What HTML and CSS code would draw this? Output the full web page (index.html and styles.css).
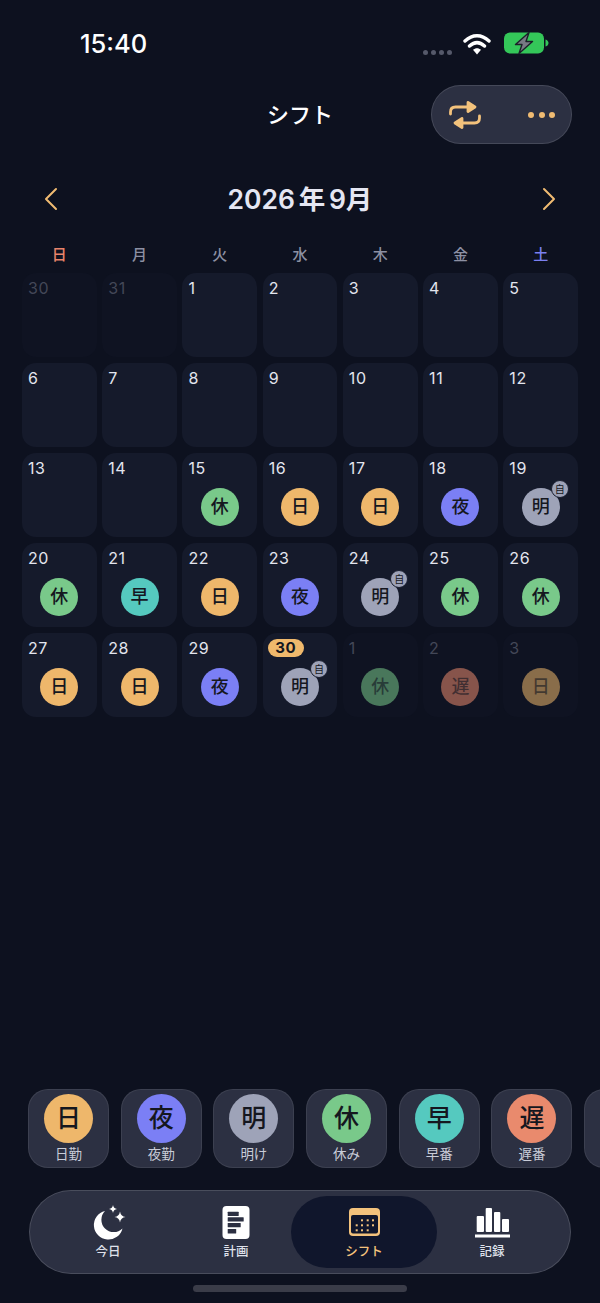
FILE: index.html
```html
<!DOCTYPE html>
<html lang="ja">
<head>
  <title>シフト</title>
  <link rel="stylesheet" href="styles.css">
</head>
<body>
  <div class="status-bar">
    <span class="time">15:40</span>
    <div class="status-icons">
      <div class="signal"><i></i><i></i><i></i><i></i></div>
      <svg class="wifi" width="28" height="22" viewBox="0 0 28 22">
        <path d="M2 8C9.5 1 18.5 1 26 8M6.5 13C11.5 8.5 16.5 8.5 21.5 13" fill="none" stroke="#fff" stroke-width="3.4" stroke-linecap="round"/>
        <path d="M10 16.8C12.5 14.6 15.5 14.6 18 16.8L14 21.5Z" fill="#fff"/>
      </svg>
      <svg class="battery" width="45" height="22" viewBox="0 0 45 22">
        <rect x="0" y="0.5" width="40" height="21" rx="6" fill="#34c759"/>
        <path d="M41.5 7.5C43.5 8 44.5 9.5 44.5 11C44.5 12.5 43.5 14 41.5 14.5Z" fill="#34c759"/>
        <path d="M25 0.5L11.5 12.5H18L15 21.5L28.5 9.5H22Z" fill="#777a84" stroke="#1b2028" stroke-width="1.4" stroke-linejoin="round"/>
      </svg>
    </div>
  </div>

  <header class="top-bar">
    <span></span>
    <h1 class="title">シフト</h1>
    <div class="actions">
      <svg width="34" height="30" viewBox="0 0 34 30" fill="none" stroke="#f3c27c" stroke-width="2.8" stroke-linecap="round" stroke-linejoin="round">
        <path d="M2.5 14V12C2.5 8.5 4.5 7 7.5 7H21"/>
        <path d="M20 2.5L27 7L20 11.5Z" fill="#f3c27c"/>
        <path d="M31.5 16V18C31.5 21.5 29.5 23 26.5 23H13"/>
        <path d="M14 18.5L7 23L14 27.5Z" fill="#f3c27c"/>
      </svg>
      <div class="more"><i></i><i></i><i></i></div>
    </div>
  </header>

  <div class="month-row">
    <svg width="14" height="24" viewBox="0 0 14 24" fill="none" stroke="#f0bb72" stroke-width="2" stroke-linecap="round" stroke-linejoin="round"><path d="M12 2L2 12L12 22"/></svg>
    <h2 class="month">2026 年 9月</h2>
    <svg width="14" height="24" viewBox="0 0 14 24" fill="none" stroke="#f0bb72" stroke-width="2" stroke-linecap="round" stroke-linejoin="round"><path d="M2 2L12 12L2 22"/></svg>
  </div>

  <div class="weekdays">
    <span class="sun">日</span><span>月</span><span>火</span><span>水</span><span>木</span><span>金</span><span class="sat">土</span>
  </div>

  <div class="calendar">
    <div class="day other"><span class="num">30</span></div>
    <div class="day other"><span class="num">31</span></div>
    <div class="day"><span class="num">1</span></div>
    <div class="day"><span class="num">2</span></div>
    <div class="day"><span class="num">3</span></div>
    <div class="day"><span class="num">4</span></div>
    <div class="day"><span class="num">5</span></div>

    <div class="day"><span class="num">6</span></div>
    <div class="day"><span class="num">7</span></div>
    <div class="day"><span class="num">8</span></div>
    <div class="day"><span class="num">9</span></div>
    <div class="day"><span class="num">10</span></div>
    <div class="day"><span class="num">11</span></div>
    <div class="day"><span class="num">12</span></div>

    <div class="day"><span class="num">13</span></div>
    <div class="day"><span class="num">14</span></div>
    <div class="day"><span class="num">15</span><div class="shift rest">休</div></div>
    <div class="day"><span class="num">16</span><div class="shift dayshift">日</div></div>
    <div class="day"><span class="num">17</span><div class="shift dayshift">日</div></div>
    <div class="day"><span class="num">18</span><div class="shift night">夜</div></div>
    <div class="day"><span class="num">19</span><div class="shift after">明<span class="auto">自</span></div></div>

    <div class="day"><span class="num">20</span><div class="shift rest">休</div></div>
    <div class="day"><span class="num">21</span><div class="shift early">早</div></div>
    <div class="day"><span class="num">22</span><div class="shift dayshift">日</div></div>
    <div class="day"><span class="num">23</span><div class="shift night">夜</div></div>
    <div class="day"><span class="num">24</span><div class="shift after">明<span class="auto">自</span></div></div>
    <div class="day"><span class="num">25</span><div class="shift rest">休</div></div>
    <div class="day"><span class="num">26</span><div class="shift rest">休</div></div>

    <div class="day"><span class="num">27</span><div class="shift dayshift">日</div></div>
    <div class="day"><span class="num">28</span><div class="shift dayshift">日</div></div>
    <div class="day"><span class="num">29</span><div class="shift night">夜</div></div>
    <div class="day"><span class="num today">30</span><div class="shift after">明<span class="auto">自</span></div></div>
    <div class="day other"><span class="num">1</span><div class="shift rest">休</div></div>
    <div class="day other"><span class="num">2</span><div class="shift late">遅</div></div>
    <div class="day other"><span class="num">3</span><div class="shift dayshift">日</div></div>
  </div>

  <div class="palette">
    <div class="chip"><div class="chip-circle dayshift">日</div><span>日勤</span></div>
    <div class="chip"><div class="chip-circle night">夜</div><span>夜勤</span></div>
    <div class="chip"><div class="chip-circle after">明</div><span>明け</span></div>
    <div class="chip"><div class="chip-circle rest">休</div><span>休み</span></div>
    <div class="chip"><div class="chip-circle early">早</div><span>早番</span></div>
    <div class="chip"><div class="chip-circle late">遅</div><span>遅番</span></div>
    <div class="chip"></div>
  </div>

  <nav class="tabbar">
    <div class="tab">
      <svg class="tab-icon" viewBox="0 0 34 34">
        <path d="M14 6A14.5 14.5 0 1 0 31.5 23.5A11.5 11.5 0 0 1 14 6Z" fill="#fff"/>
        <path d="M29 6.5Q29.7 11.3 34.5 12Q29.7 12.7 29 17.5Q28.3 12.7 23.5 12Q28.3 11.3 29 6.5Z" fill="#fff"/>
        <path d="M22 0Q22.5 3.5 26 4Q22.5 4.5 22 8Q21.5 4.5 18 4Q21.5 3.5 22 0Z" fill="#fff"/>
      </svg>
      <span>今日</span>
    </div>
    <div class="tab">
      <svg class="tab-icon" viewBox="0 0 34 34">
        <rect x="3.5" y="1" width="27" height="33" rx="4" fill="#fff"/>
        <g fill="#2c3042">
          <rect x="8.7" y="6.7" width="11" height="4.3" rx="0.5"/>
          <rect x="8.7" y="12.3" width="16" height="4.3" rx="0.5"/>
          <rect x="8.7" y="18" width="13" height="4.3" rx="0.5"/>
          <rect x="8.7" y="24" width="8.5" height="4.5" rx="0.5"/>
        </g>
      </svg>
      <span>計画</span>
    </div>
    <div class="tab active">
      <svg class="tab-icon" viewBox="0 0 34 34">
        <rect x="2" y="3" width="31" height="28" rx="4" fill="#f3c27c"/>
        <rect x="4" y="10" width="27" height="18.5" rx="2" fill="#10162c"/>
        <g fill="#f3c27c">
          <rect x="14" y="14.3" width="2" height="2"/><rect x="19.7" y="14.3" width="2" height="2"/><rect x="25" y="14.3" width="2" height="2"/>
          <rect x="8.7" y="19.3" width="2" height="2"/><rect x="14" y="19.3" width="2" height="2"/><rect x="19.7" y="19.3" width="2" height="2"/><rect x="25" y="19.3" width="2" height="2"/>
          <rect x="8.7" y="24.3" width="2" height="2"/><rect x="14" y="24.3" width="2" height="2"/><rect x="19.7" y="24.3" width="2" height="2"/>
        </g>
      </svg>
      <span>シフト</span>
    </div>
    <div class="tab">
      <svg class="tab-icon" viewBox="0 0 34 34">
        <g fill="#fff">
          <rect x="1.7" y="11" width="7.3" height="16" rx="1"/>
          <rect x="10.7" y="3" width="6.3" height="24" rx="1"/>
          <rect x="19" y="7" width="6.3" height="20" rx="1"/>
          <rect x="27" y="14" width="7" height="13" rx="1"/>
          <rect x="0" y="29.5" width="35" height="3"/>
        </g>
      </svg>
      <span>記録</span>
    </div>
  </nav>

  <div class="home-indicator"></div>
</body>
</html>
```

FILE: styles.css
```css
* {
  box-sizing: border-box;
}

body {
  margin: 0;
  width: 600px;
  height: 1303px;
  overflow: hidden;
  display: flex;
  flex-direction: column;
  background-color: #0d111f;
  color: #e8eaf2;
  font-family: Inter, "Noto Sans CJK JP", sans-serif;
}

/* status bar */
.status-bar {
  height: 85px;
  flex-shrink: 0;
  display: flex;
  justify-content: space-between;
  align-items: flex-start;
  padding: 28px 51px 0 80px;
}

.time {
  font-size: 25.5px;
  line-height: 32px;
  font-weight: 500;
  color: #fff;
}

.status-icons {
  display: flex;
  align-items: flex-start;
  padding-top: 4px;
}

.signal {
  display: flex;
  gap: 3px;
  margin: 18px 11px 0 0;
}

.signal i {
  width: 5px;
  height: 5px;
  border-radius: 50%;
  background-color: #55596a;
}

.wifi {
  margin: 1px 13px 0 0;
}

/* header */
.top-bar {
  height: 59px;
  flex-shrink: 0;
  display: grid;
  grid-template-columns: 1fr auto 1fr;
  align-items: center;
}

.title {
  margin: 0;
  padding-bottom: 4px;
  font-size: 22px;
  font-weight: 500;
  color: #fff;
}

.actions {
  justify-self: end;
  width: 141px;
  height: 59px;
  margin-right: 28px;
  display: flex;
  align-items: center;
  justify-content: space-between;
  padding: 0 16px;
  background-color: #2c3042;
  border: 1px solid rgba(255, 255, 255, 0.12);
  border-radius: 30px;
}

.more {
  display: flex;
  gap: 4.5px;
}

.more i {
  width: 6px;
  height: 6px;
  border-radius: 50%;
  background-color: #f0bb72;
}

/* month */
.month-row {
  height: 40px;
  flex-shrink: 0;
  margin-top: 35px;
  padding: 0 44px;
  display: flex;
  align-items: center;
  justify-content: space-between;
}

.month {
  margin: 0;
  padding-bottom: 4px;
  font-size: 26.5px;
  font-weight: 600;
  color: #e4e6f2;
  word-spacing: -3px;
}

.weekdays {
  height: 20px;
  flex-shrink: 0;
  margin-top: 26px;
  padding: 0 22px;
  display: grid;
  grid-template-columns: repeat(7, 1fr);
  column-gap: 5.5px;
  text-align: center;
  font-size: 15px;
  line-height: 20px;
  font-weight: 500;
  color: #8c90a3;
}

.weekdays .sun {
  color: #e8846b;
}

.weekdays .sat {
  color: #7b80f0;
}

/* calendar */
.calendar {
  flex-shrink: 0;
  margin-top: 8px;
  padding: 0 22px;
  display: grid;
  grid-template-columns: repeat(7, 1fr);
  grid-auto-rows: 84px;
  gap: 6px 5.5px;
}

.day {
  position: relative;
  padding: 5px 6px 0;
  background-color: #151a2b;
  border-radius: 14px;
}

.day.other {
  background-color: #0f1322;
}

.num {
  display: block;
  font-size: 16px;
  line-height: 20px;
  letter-spacing: 0.6px;
  color: #e3e5ee;
}

.other .num {
  color: #434757;
}

.num.today {
  width: 36px;
  height: 18px;
  margin: 1px 0 0 -1px;
  background-color: #f0b96c;
  border-radius: 9px;
  color: #15171f;
  font-size: 15px;
  line-height: 18px;
  font-weight: 700;
  text-align: center;
  letter-spacing: 0.5px;
}

.shift {
  position: absolute;
  left: 50%;
  top: 35px;
  width: 38px;
  height: 38px;
  margin-left: -19px;
  border-radius: 50%;
  color: #15171f;
  font-size: 18px;
  line-height: 38px;
  font-weight: 500;
  text-align: center;
}

.other .shift {
  opacity: 0.55;
  color: rgba(21, 23, 31, 0.6);
}

.auto {
  position: absolute;
  top: -8px;
  right: -9px;
  width: 18px;
  height: 18px;
  background-color: #9ea3b8;
  border: 1px solid #1a1f30;
  border-radius: 50%;
  font-size: 10px;
  line-height: 16px;
  font-weight: 400;
}

.dayshift {
  background-color: #eeb76b;
}

.night {
  background-color: #7b7ff5;
}

.after {
  background-color: #9ea3b8;
}

.rest {
  background-color: #79c98a;
}

.early {
  background-color: #55c9bf;
}

.late {
  background-color: #e98a6d;
}

/* shift palette */
.palette {
  flex-shrink: 0;
  margin-top: auto;
  padding-left: 28px;
  display: flex;
  gap: 11.7px;
  overflow: hidden;
}

.chip {
  width: 81px;
  height: 79px;
  flex-shrink: 0;
  display: flex;
  flex-direction: column;
  align-items: center;
  padding-top: 4px;
  background-color: #2c3042;
  border: 1px solid rgba(255, 255, 255, 0.08);
  border-radius: 20px;
  font-size: 13.5px;
  line-height: 18px;
  color: #c9ccd8;
}

.chip-circle {
  width: 49px;
  height: 49px;
  margin-bottom: 2px;
  border-radius: 50%;
  color: #15171f;
  font-size: 25px;
  line-height: 49px;
  font-weight: 500;
  text-align: center;
}

/* tab bar */
.tabbar {
  flex-shrink: 0;
  width: 542px;
  height: 84px;
  margin: 22px 0 0 29px;
  padding: 5px 14px;
  display: grid;
  grid-template-columns: repeat(4, 1fr);
  background-color: #2c3042;
  border: 1px solid rgba(255, 255, 255, 0.14);
  border-radius: 42px;
}

.tab {
  display: flex;
  flex-direction: column;
  align-items: center;
  padding-top: 9px;
  font-size: 12.5px;
  line-height: 18px;
  font-weight: 500;
  color: #dfe1ea;
}

.tab-icon {
  width: 34px;
  height: 34px;
  margin-bottom: 4px;
  overflow: visible;
}

.tab.active {
  margin: 0 -9px;
  background-color: #10162c;
  border-radius: 36px;
  color: #f3c27c;
}

.home-indicator {
  flex-shrink: 0;
  width: 214px;
  height: 7px;
  margin: 11px 0 11px 193px;
  background-color: #3a3c48;
  border-radius: 4px;
}
```
